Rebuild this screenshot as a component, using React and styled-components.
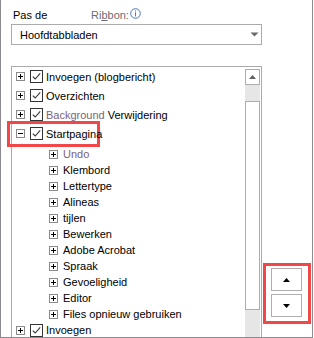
import React from 'react';
import styled, { createGlobalStyle } from 'styled-components';

const Global = createGlobalStyle`
  html, body { margin: 0; padding: 0; background: #fff; }
  body { font-family: "Liberation Sans", Arial, sans-serif; font-size: 11px; color: #000; }
  * { box-sizing: border-box; }
`;

const Frame = styled.div`
  width: 313px;
  height: 338px;
  border-left: 1px solid #8f8991;
  border-right: 1px solid #8f8991;
  border-bottom: 1px solid #8f8991;
  padding-left: 10px;
  display: flex;
  flex-direction: column;
  overflow: hidden;
`;

const Header = styled.div`
  height: 24px;
  padding: 6px 0 0 2px;
  display: flex;
  align-items: center;
`;

const Label = styled.span`
  width: 78px;
  white-space: nowrap;
`;

const Ribbon = styled.span`
  color: #6f6a72;
  white-space: nowrap;
  u { text-decoration: underline; }
`;

const Info = styled.svg`
  width: 11px;
  height: 11px;
  margin-left: 1px;
  margin-top: -3px;
`;

const Select = styled.div`
  width: 251px;
  height: 21px;
  border: 1px solid #ababab;
  display: flex;
  align-items: center;
  justify-content: space-between;
  padding: 0 2px 0 8px;
`;

const Caret = styled.svg`
  width: 9px;
  height: 5px;
`;

const Main = styled.div`
  margin-top: 21px;
  flex: 1;
  display: flex;
  min-height: 0;
`;

const ListBox = styled.div`
  width: 251px;
  border: 1px solid #ababab;
  border-bottom: none;
  display: flex;
`;

const Tree = styled.div`
  flex: 1;
  min-width: 0;
  padding-left: 4px;
`;

const Row = styled.div`
  height: ${(p) => p.$h || 16}px;
  display: flex;
  align-items: center;
  white-space: nowrap;
  padding-left: ${(p) => (p.$child ? 33 : 0)}px;
  margin-top: ${(p) => p.$mt || 0}px;
`;

const Text = styled.span`
  margin-left: ${(p) => p.$ml || 3}px;
  color: ${(p) => p.$color || '#000'};
`;

const Muted = styled.span`
  color: #7d6377;
`;

const Highlight = styled.div`
  flex: none;
  margin-left: -9px;
  padding-left: 6px;
  width: 93px;
  height: 26px;
  border: 3px solid #f04848;
  display: flex;
  align-items: center;
`;

const ScrollBar = styled.div`
  flex: none;
  width: 16px;
  padding: 2px 1px 0 0;
  display: flex;
  flex-direction: column;
`;

const ScrollBtn = styled.div`
  height: 16px;
  border: 1px solid #adadad;
  display: flex;
  align-items: center;
  justify-content: center;
`;

const Track = styled.div`
  background: #e6e6e6;
  height: ${(p) => p.$h || 0}px;
  flex: ${(p) => (p.$grow ? 1 : 'none')};
`;

const Thumb = styled.div`
  height: 209px;
  border: 1px solid #adadad;
  background: #fff;
`;

const Side = styled.div`
  margin-left: 1px;
  padding-top: 197px;
`;

const MoveBox = styled.div`
  width: 48px;
  height: 61px;
  border: 3px solid #f04848;
  padding: 2px 0 0 5px;
  display: flex;
  flex-direction: column;
  gap: 3px;
`;

const MoveBtn = styled.div`
  width: 31px;
  height: 23px;
  border: 1px solid #adadad;
  display: flex;
  align-items: center;
  justify-content: center;
`;

const Expander = ({ open }) => (
  <svg width="9" height="9" viewBox="0 0 9 9" style={{ flex: 'none' }}>
    <rect x="0.5" y="0.5" width="8" height="8" fill="#fff" stroke="#8a8a8a" />
    <path d="M2 4.5H7" stroke="#000" />
    {!open && <path d="M4.5 2V7" stroke="#000" />}
  </svg>
);

const Check = () => (
  <svg width="13" height="13" viewBox="0 0 13 13" style={{ flex: 'none', marginLeft: 5 }}>
    <rect x="0.5" y="0.5" width="12" height="12" fill="#fff" stroke="#333" />
    <path d="M2.8 6.6L5.2 9L10.2 3.4" fill="none" stroke="#333" strokeWidth="1.1" />
  </svg>
);

const Tri = ({ up, color = '#000', w = 7, h = 4 }) => (
  <svg width={w} height={h} viewBox={`0 0 ${w} ${h}`}>
    <path d={up ? `M0 ${h}L${w / 2} 0L${w} ${h}Z` : `M0 0L${w} 0L${w / 2} ${h}Z`} fill={color} />
  </svg>
);

const children = [
  'Klembord',
  'Lettertype',
  'Alineas',
  'tijlen',
  'Bewerken',
  'Adobe Acrobat',
  'Spraak',
  'Gevoeligheid',
  'Editor',
  'Files opnieuw gebruiken',
];

export default function App() {
  return (
    <>
      <Global />
      <Frame>
        <Header>
          <Label>Pas de</Label>
          <Ribbon>
            Ri<u>b</u>bon:
          </Ribbon>
          <Info viewBox="0 0 11 11">
            <circle cx="5.5" cy="5.5" r="4.8" fill="none" stroke="#4a78b5" strokeWidth="1" />
            <rect x="5" y="2.4" width="1" height="1.1" fill="#4a78b5" />
            <rect x="5" y="4.3" width="1" height="4.2" fill="#4a78b5" />
          </Info>
        </Header>
        <Select>
          <span>Hoofdtabbladen</span>
          <Caret viewBox="0 0 9 5">
            <path d="M0.5 0.5H8.5L4.5 4.5Z" fill="#6a6a6a" />
          </Caret>
        </Select>
        <Main>
          <ListBox>
            <Tree>
              <Row $h={19}>
                <Expander />
                <Check />
                <Text>Invoegen (blogbericht)</Text>
              </Row>
              <Row $h={19}>
                <Expander />
                <Check />
                <Text>Overzichten</Text>
              </Row>
              <Row $h={19}>
                <Expander />
                <Check />
                <Text>
                  <Muted>Background</Muted> Verwijdering
                </Text>
              </Row>
              <Row $h={19}>
                <Highlight>
                  <Expander open />
                  <Check />
                  <Text>Startpagina</Text>
                </Highlight>
              </Row>
              <Row $child $mt={3}>
                <Expander />
                <Text $ml={5} $color="#7d6377">Undo</Text>
              </Row>
              {children.map((c) => (
                <Row $child key={c}>
                  <Expander />
                  <Text $ml={5}>{c}</Text>
                </Row>
              ))}
              <Row>
                <Expander />
                <Check />
                <Text>Invoegen</Text>
              </Row>
            </Tree>
            <ScrollBar>
              <ScrollBtn>
                <Tri up color="#606060" />
              </ScrollBtn>
              <Track $h={16} />
              <Thumb />
              <Track $grow />
            </ScrollBar>
          </ListBox>
          <Side>
            <MoveBox>
              <MoveBtn>
                <Tri up />
              </MoveBtn>
              <MoveBtn>
                <Tri />
              </MoveBtn>
            </MoveBox>
          </Side>
        </Main>
      </Frame>
    </>
  );
}
